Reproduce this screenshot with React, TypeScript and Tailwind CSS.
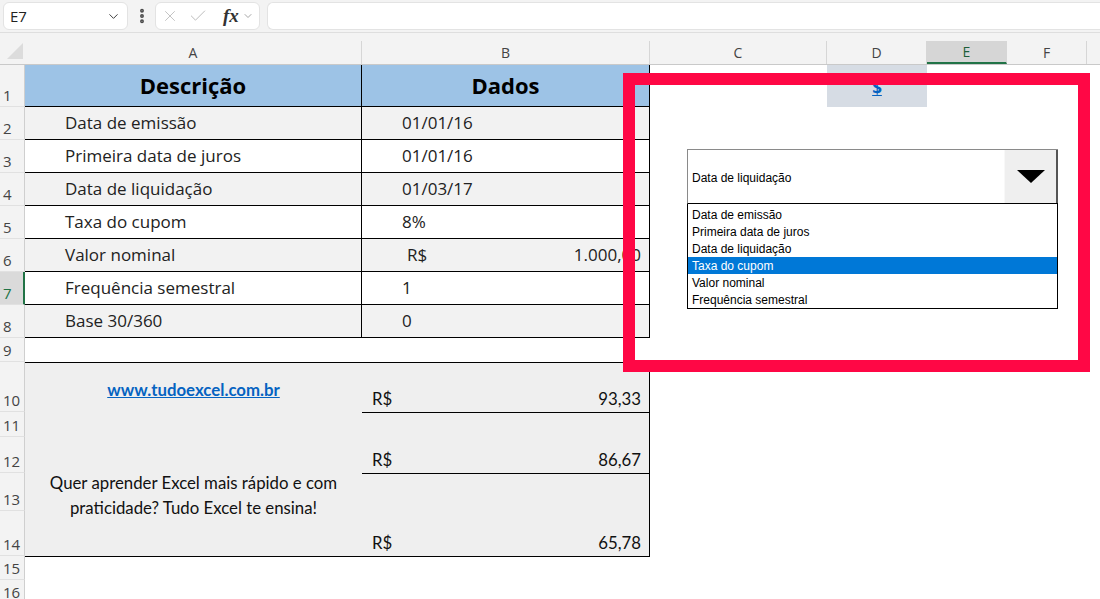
import React from "react";
import { ChevronDown, EllipsisVertical, X, Check } from "lucide-react";

const rows = [
  { n: 1, h: "h-[42px]" },
  { n: 2, h: "h-[33px]" },
  { n: 3, h: "h-[33px]" },
  { n: 4, h: "h-[33px]" },
  { n: 5, h: "h-[33px]" },
  { n: 6, h: "h-[33px]" },
  { n: 7, h: "h-[33px]" },
  { n: 8, h: "h-[33px]" },
  { n: 9, h: "h-[24px]" },
  { n: 10, h: "h-[50px]" },
  { n: 11, h: "h-[25px]" },
  { n: 12, h: "h-[36px]" },
  { n: 13, h: "h-[38px]" },
  { n: 14, h: "h-[45px]" },
  { n: 15, h: "h-[24px]" },
  { n: 16, h: "h-[24px]" },
];

const dataRows = [
  { label: "Data de emissão", value: "01/01/16", gray: true },
  { label: "Primeira data de juros", value: "01/01/16", gray: false },
  { label: "Data de liquidação", value: "01/03/17", gray: true },
  { label: "Taxa do cupom", value: "8%", gray: false },
  { label: "Valor nominal", value: "", gray: true, money: "1.000,00" },
  { label: "Frequência semestral", value: "1", gray: false },
  { label: "Base 30/360", value: "0", gray: true },
];

const options = [
  "Data de emissão",
  "Primeira data de juros",
  "Data de liquidação",
  "Taxa do cupom",
  "Valor nominal",
  "Frequência semestral",
];

const cellFont = { fontFamily: '"Open Sans", "Noto Sans", sans-serif' };

function FormulaBar() {
  return (
    <div className="h-[33px] bg-[#f3f3f3] flex items-center pl-[3px] border-b border-[#dedede]">
      <div className="w-[125px] h-[28px] bg-white rounded-md border border-[#e3e3e3] flex items-center justify-between pl-[6px] pr-[6px]">
        <span className="text-[15px] text-[#222]">E7</span>
        <ChevronDown size={15} strokeWidth={1.5} className="text-[#333]" />
      </div>
      <div className="w-[27px] flex justify-center">
        <EllipsisVertical size={18} strokeWidth={3.2} className="text-[#4a4a4a]" />
      </div>
      <div className="w-[105px] h-[28px] bg-white rounded-md border border-[#e3e3e3] flex items-center pl-[5px] gap-[9px]">
        <X size={18} strokeWidth={1.2} className="text-[#bdbdbd]" />
        <Check size={20} strokeWidth={1.2} className="text-[#bdbdbd]" />
        <span className="ml-[6px] text-[19px] italic font-semibold text-[#333]" style={{ fontFamily: '"Liberation Serif", serif' }}>
          fx
        </span>
        <ChevronDown size={12} strokeWidth={1.5} className="text-[#888] -ml-[6px]" />
      </div>
      <div className="ml-[7px] flex-1 h-[28px] bg-white rounded-l-md border border-r-0 border-[#e3e3e3]" />
    </div>
  );
}

function ColumnHeaders() {
  const cols = [
    { l: "A", w: "w-[337px]" },
    { l: "B", w: "w-[288px]" },
    { l: "C", w: "w-[177px]" },
    { l: "D", w: "w-[100px]" },
    { l: "E", w: "w-[80px]", active: true },
    { l: "F", w: "w-[80px]" },
  ];
  return (
    <div className="bg-[#f3f3f3] pt-[8px] flex border-b border-[#c9c9c9]">
      <div className="w-[25px] h-[23px] relative">
        <div className="absolute left-[7px] top-[2px] w-0 h-0 border-l-[16px] border-l-transparent border-b-[16px] border-b-[#dcdcdc]" />
      </div>
      {cols.map((c) => (
        <div
          key={c.l}
          className={`${c.w} h-[23px] flex items-center justify-center text-[14px] border-r border-[#d6d6d6] ${
            c.active ? "bg-[#d6d6d6] text-[#1e5e3a] border-b-2 border-b-[#217346]" : "text-[#444]"
          }`}
        >
          {c.l}
        </div>
      ))}
      <div className="flex-1" />
    </div>
  );
}

function RowHeaders() {
  return (
    <div className="w-[25px] flex flex-col bg-[#f3f3f3]">
      {rows.map((r) => (
        <div
          key={r.n}
          className={`${r.h} shrink-0 flex items-end pl-[3px] pb-[3px] text-[15px] leading-none border-b border-[#e1e1e1] ${
            r.n === 7
              ? "bg-[#dadada] text-[#217346] border-r-2 border-r-[#217346]"
              : "text-[#444] border-r border-r-[#cfcfcf]"
          }`}
        >
          {r.n}
        </div>
      ))}
    </div>
  );
}

function Sheet() {
  return (
    <div className="flex-1 flex flex-col bg-white" style={cellFont}>
      <div className="flex h-[42px] shrink-0">
        <div className="w-[337px] bg-[#9dc3e6] border-r border-b border-black flex items-center justify-center text-[22px] font-bold text-black">
          Descrição
        </div>
        <div className="w-[288px] bg-[#9dc3e6] border-r border-b border-black flex items-center justify-center text-[22px] font-bold text-black">
          Dados
        </div>
        <div className="w-[177px]" />
        <div className="w-[100px] bg-[#d6dce4] flex items-center justify-center pt-[4px]">
          <span className="text-[17px] font-bold underline text-[#0563c1]">$</span>
        </div>
      </div>
      {dataRows.map((r) => (
        <div key={r.label} className="flex h-[33px] shrink-0 text-[17px] text-[#222]">
          <div className={`w-[337px] border-r border-b border-black flex items-center pl-[40px] ${r.gray ? "bg-[#f2f2f2]" : "bg-white"}`}>
            {r.label}
          </div>
          <div className={`w-[288px] border-r border-b border-black flex items-center ${r.gray ? "bg-[#f2f2f2]" : "bg-white"} ${r.money ? "pl-[45px] pr-[8px] justify-between" : "pl-[40px]"}`}>
            {r.money ? (
              <>
                <span>R$</span>
                <span>{r.money}</span>
              </>
            ) : (
              r.value
            )}
          </div>
        </div>
      ))}
      <div className="h-[24px] shrink-0" />
      <div className="flex shrink-0 text-[16.8px] text-[#111]" style={{ fontFamily: "Lato, sans-serif" }}>
        <div className="w-[337px] bg-[#efefef] border-t border-b border-black flex flex-col">
          <div className="h-[75px] flex justify-center pt-[14px]">
            <span className="font-bold underline text-[#0563c1]">www.tudoexcel.com.br</span>
          </div>
          <div className="h-[118px] flex flex-col items-center justify-center text-center leading-[25px] pb-[4px]">
            <span>Quer aprender Excel mais rápido e com</span>
            <span>praticidade? Tudo Excel te ensina!</span>
          </div>
        </div>
        <div className="w-[288px] bg-[#efefef] border-t border-b border-r border-black flex flex-col">
          <div className="h-[50px] border-b border-black flex items-end justify-between pl-[10px] pr-[8px] pb-[1px]">
            <span>R$</span>
            <span>93,33</span>
          </div>
          <div className="h-[61px] border-b border-black flex items-end justify-between pl-[10px] pr-[8px] pb-[1px]">
            <span>R$</span>
            <span>86,67</span>
          </div>
          <div className="flex-1 flex items-end justify-between pl-[10px] pr-[8px] pb-[1px]">
            <span>R$</span>
            <span>65,78</span>
          </div>
        </div>
      </div>
    </div>
  );
}

function ComboBox() {
  return (
    <div className="absolute left-[687px] top-[149px] w-[371px] text-[12px] text-black" style={{ fontFamily: '"Liberation Sans", Arial, sans-serif' }}>
      <div className="h-[55px] bg-white border-t border-l border-[#8a8a8a] border-b border-b-black flex items-center justify-between">
        <span className="pl-[4px] pt-[3px]">Data de liquidação</span>
        <div className="w-[54px] h-full bg-[#efefef] border-r-2 border-r-[#555] border-l border-l-[#f8f8f8] flex items-center justify-center">
          <svg width="28" height="13" viewBox="0 0 28 13">
            <polygon points="0,0 28,0 14,13" fill="#000" />
          </svg>
        </div>
      </div>
      <div className="bg-white border border-t-0 border-black pt-[2px]">
        {options.map((o) => (
          <div
            key={o}
            className={`h-[17px] leading-[18px] pl-[4px] ${o === "Taxa do cupom" ? "bg-[#0078d7] text-white" : ""}`}
          >
            {o}
          </div>
        ))}
      </div>
    </div>
  );
}

export default function App() {
  return (
    <div className="relative w-[1100px] h-[599px] overflow-hidden bg-white" style={{ fontFamily: '"Open Sans", "Noto Sans", sans-serif' }}>
      <FormulaBar />
      <ColumnHeaders />
      <div className="flex">
        <RowHeaders />
        <Sheet />
      </div>
      <ComboBox />
      <div className="absolute left-[623px] top-[73px] w-[467px] h-[299px] border-[12px] border-[#ff0745]" />
    </div>
  );
}
